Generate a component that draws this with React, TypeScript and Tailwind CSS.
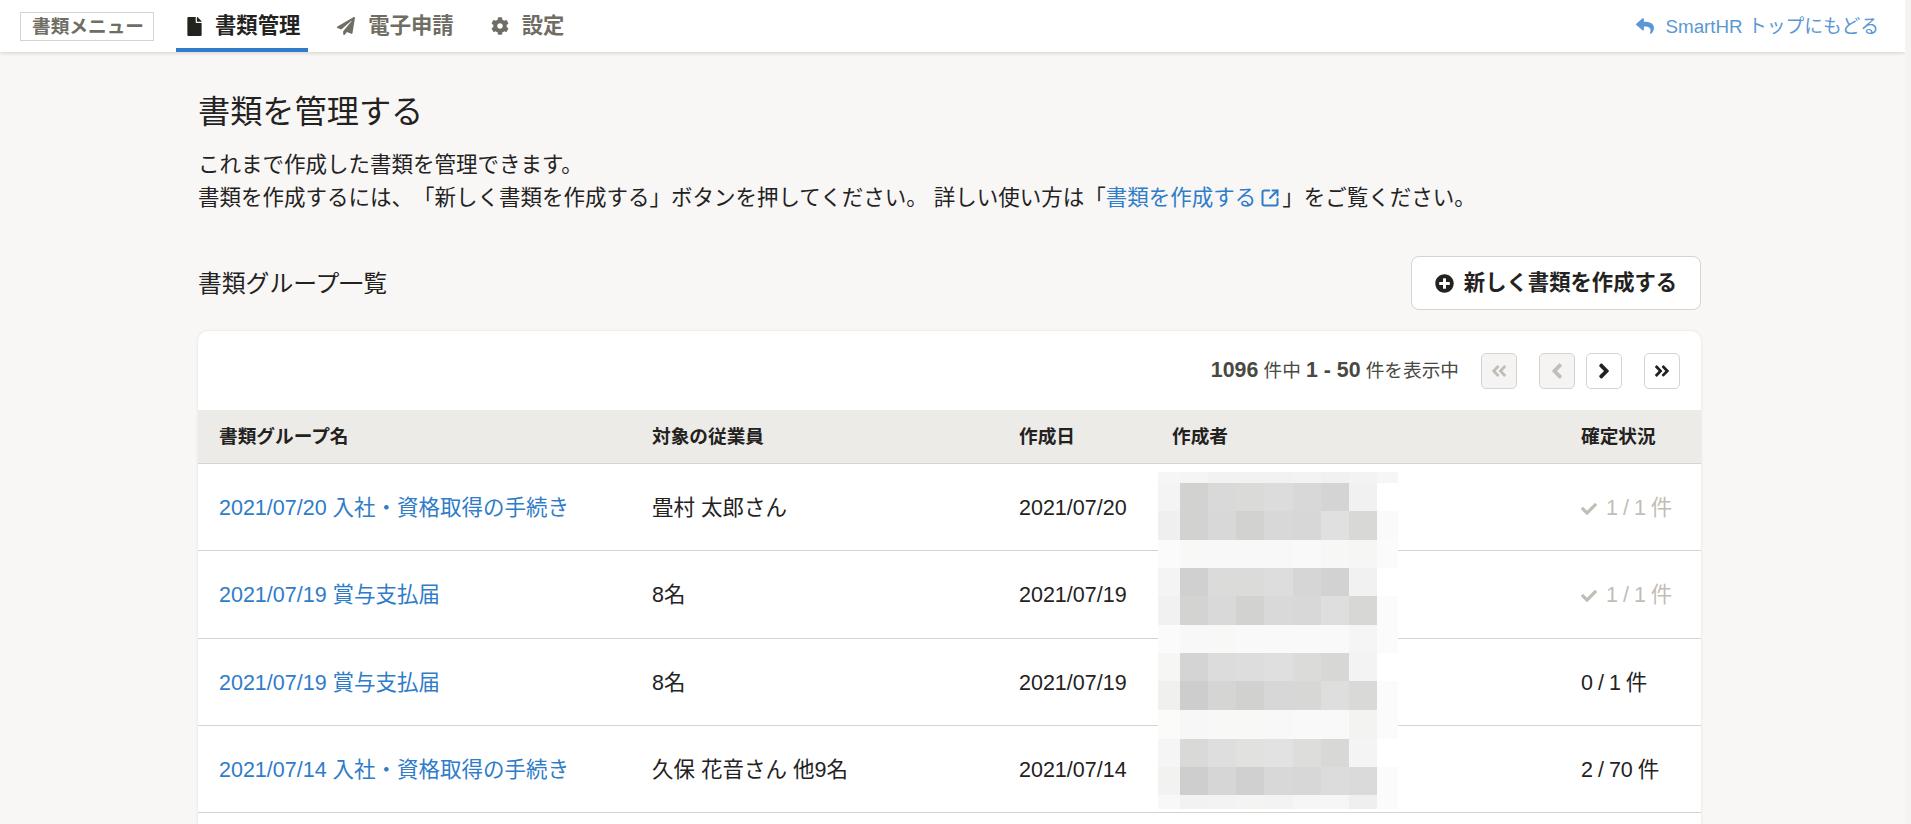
import {
  FaAngleDoubleLeft,
  FaAngleDoubleRight,
  FaAngleLeft,
  FaAngleRight,
  FaCheck,
  FaCog,
  FaFile,
  FaPaperPlane,
  FaPlusCircle,
  FaReply,
} from "react-icons/fa";
import { SquareArrowOutUpRight } from "lucide-react";
import type { ReactNode } from "react";

const mosaicCols = [22, 28, 28, 28, 29, 28, 28, 28, 21];
const mosaicRows = [11, 28, 29, 28, 28, 29, 28, 28, 29, 29, 28, 28, 14];
const mosaic = [
  ["#f6f6f4", "#f5f5f3", "#f3f2f0", "#f3f2f0", "#f3f2f0", "#f3f3f1", "#f1f1ef", "#f3f3f3", "#f6f6f4"],
  ["#f4f4f4", "#d2d2d0", "#d9d9d9", "#dadad8", "#dcdcdc", "#d8d8d8", "#d4d4d4", "#f1f1f1", "#ffffff"],
  ["#efefef", "#d2d2d0", "#d8d8d8", "#d2d2d0", "#d8d8d8", "#d7d7d7", "#e0e0e0", "#d8d8d6", "#fafafa"],
  ["#fbfbfb", "#f8f8f6", "#f8f8f8", "#f8f8f8", "#f8f8f8", "#f9f9f9", "#f7f7f5", "#f6f6f4", "#fbfbfb"],
  ["#f4f4f4", "#d0d0d0", "#dbdbd9", "#dbdbd9", "#dddddd", "#d6d6d6", "#d2d2d2", "#f1f1f1", "#ffffff"],
  ["#f1f1f1", "#d3d3d1", "#d9d9d9", "#d2d2d0", "#d9d9d9", "#d8d8d8", "#dedede", "#d7d7d5", "#fbfbfb"],
  ["#fbfbfb", "#f8f8f8", "#f8f8f6", "#f9f9f9", "#f9f9f9", "#f9f9f9", "#f9f9f9", "#f5f5f5", "#fbfbfb"],
  ["#f6f6f4", "#d4d4d4", "#dcdcdc", "#dddddd", "#dfdfdf", "#dbdbd9", "#d7d7d5", "#f3f3f3", "#ffffff"],
  ["#f0f0ee", "#cdcdcd", "#d5d5d3", "#d1d1cf", "#d7d7d7", "#d7d7d5", "#dedede", "#d9d9d7", "#fbfbfb"],
  ["#fbfbf9", "#f7f7f7", "#f8f8f6", "#f8f8f6", "#f8f8f8", "#f9f9f9", "#f9f9f9", "#f3f3f1", "#fbfbfb"],
  ["#f5f5f5", "#d9d9d7", "#dedede", "#e1e1df", "#e2e2e2", "#dddddb", "#d8d8d6", "#f4f4f4", "#ffffff"],
  ["#f2f2f0", "#cecece", "#d6d6d6", "#d0d0d0", "#d8d8d8", "#d7d7d7", "#dcdcdc", "#dadada", "#fbfbfb"],
  ["#f8f8f8", "#f2f2f2", "#f3f3f3", "#f4f4f2", "#f3f3f3", "#f6f6f6", "#f6f6f6", "#efefef", "#fbfbfb"],
];

const rows = [
  { name: "2021/07/20 入社・資格取得の手続き", target: "畳村 太郎さん", date: "2021/07/20", status: "1 / 1 件", done: true },
  { name: "2021/07/19 賞与支払届", target: "8名", date: "2021/07/19", status: "1 / 1 件", done: true },
  { name: "2021/07/19 賞与支払届", target: "8名", date: "2021/07/19", status: "0 / 1 件", done: false },
  { name: "2021/07/14 入社・資格取得の手続き", target: "久保 花音さん 他9名", date: "2021/07/14", status: "2 / 70 件", done: false },
];

const gridCols = "grid grid-cols-[431px_367px_153px_409px_1fr]";

// blurred-out author names, drawn over the table
const Mosaic = () => {
  let y = 0;
  return (
    <svg className="absolute left-[960px] top-[141px]" width="240" height="337" viewBox="0 0 240 337" shapeRendering="crispEdges">
      {mosaic.map((line, r) => {
        const top = y;
        y += mosaicRows[r];
        let x = 0;
        return line.map((fill, c) => {
          const left = x;
          x += mosaicCols[c];
          return <rect key={`${r}-${c}`} x={left} y={top} width={mosaicCols[c]} height={mosaicRows[r]} fill={fill} />;
        });
      })}
    </svg>
  );
};

const Tab = ({ icon, label, active }: { icon: ReactNode; label: string; active?: boolean }) => (
  <div
    className={`flex h-[52px] items-center gap-[13px] border-b-4 border-t-4 pl-[11px] pr-[8px] text-[21.33px] font-bold ${
      active ? "border-b-[#2f7cc8] border-t-transparent text-[#23221e]" : "border-transparent text-[#706d65]"
    }`}
  >
    {icon}
    <span>{label}</span>
  </div>
);

const PageButton = ({ children, disabled }: { children: ReactNode; disabled?: boolean }) => (
  <button
    className={`flex h-[36px] w-[36px] items-center justify-center rounded-[5px] border border-[#d6d3d0] ${
      disabled ? "bg-[#f5f4f3] text-[#c1bdb7]" : "bg-white text-[#23221e]"
    }`}
  >
    {children}
  </button>
);

export default function App() {
  return (
    <div
      lang="ja"
      className="h-[824px] w-[1911px] overflow-hidden border-r-[6px] border-[#f5f4f3] bg-[#f8f7f6] text-[21.5px] leading-[33px] text-[#23221e] [text-spacing-trim:space-all]"
      style={{ fontFamily: '"Liberation Sans", "Noto Sans CJK JP", sans-serif' }}
    >
      {/* Header */}
      <header className="relative z-10 flex h-[52px] items-center bg-white pl-[20px] pr-[26px] shadow-[0_1px_4px_rgba(0,0,0,0.16)]">
        <div className="mr-[22px] flex h-[29px] w-[134px] items-center justify-center border border-[#d6d3d0] pl-[2px] text-[18.67px] font-bold text-[#706d65]">
          書類メニュー
        </div>
        <div className="flex gap-[18px]">
          <Tab active icon={<FaFile className="h-[19px] w-[15px]" />} label="書類管理" />
          <Tab icon={<FaPaperPlane className="h-[18px] w-[18px]" />} label="電子申請" />
          <Tab icon={<FaCog className="h-[18px] w-[18px]" />} label="設定" />
        </div>
        <a className="ml-auto flex items-center gap-[10px] text-[18.8px] text-[#5b98d3]">
          <FaReply className="h-[18px] w-[20px]" />
          SmartHR トップにもどる
        </a>
      </header>

      {/* Main */}
      <main className="ml-[198px] w-[1503px] pt-[36px]">
        <h1 className="text-[32.2px] font-normal leading-[48px]">書類を管理する</h1>
        <p className="mt-[13px]">
          これまで作成した書類を管理できます。
          <br />
          書類を作成するには、「新しく書類を作成する」ボタンを押してください。 詳しい使い方は「
          <a className="text-[#2f7cc8]">
            書類を作成する
            <SquareArrowOutUpRight className="ml-[4px] mr-[2px] inline-block h-[20px] w-[20px] align-[-3px]" strokeWidth={2.4} />
          </a>
          」をご覧ください。
        </p>

        <div className="mt-[41px] flex items-center justify-between">
          <h2 className="text-[23.8px] font-normal">書類グループ一覧</h2>
          <button className="flex h-[54px] w-[290px] items-center justify-center gap-[10px] rounded-[8px] border border-[#d6d3d0] bg-white text-[21.33px] font-bold">
            <FaPlusCircle className="h-[19px] w-[19px]" />
            新しく書類を作成する
          </button>
        </div>

        {/* Table card */}
        <section className="relative mt-[21px] overflow-hidden rounded-t-[10px] bg-white shadow-[0_0_3px_rgba(0,0,0,0.1)]">
          <div className="flex h-[79px] items-center justify-end pr-[21px]">
            <div className="mr-[22px] text-[18.67px] text-[#4a4843]">
              <b className="text-[21.33px]">1096</b> 件中 <b className="text-[21.33px]">1 - 50</b> 件を表示中
            </div>
            <PageButton disabled>
              <FaAngleDoubleLeft className="h-[18px] w-[18px]" />
            </PageButton>
            <div className="ml-[22px]">
              <PageButton disabled>
                <FaAngleLeft className="h-[24px] w-[24px]" />
              </PageButton>
            </div>
            <div className="ml-[11px]">
              <PageButton>
                <FaAngleRight className="h-[24px] w-[24px]" />
              </PageButton>
            </div>
            <div className="ml-[22px]">
              <PageButton>
                <FaAngleDoubleRight className="h-[18px] w-[18px]" />
              </PageButton>
            </div>
          </div>

          <div className={`${gridCols} h-[54px] items-center border-b border-[#d6d3d0] bg-[#edebe8] text-[18.67px] font-bold`}>
            <div className="pl-[21px]">書類グループ名</div>
            <div className="pl-[23px]">対象の従業員</div>
            <div className="pl-[23px]">作成日</div>
            <div className="pl-[23px]">作成者</div>
            <div className="pl-[23px]">確定状況</div>
          </div>

          {rows.map((row, i) => (
            <div key={i} className={`${gridCols} h-[87.25px] items-center border-b border-[#d6d3d0] pt-[3px]`}>
              <a className="pl-[21px] text-[#2f7cc8]">{row.name}</a>
              <div className="pl-[23px]">{row.target}</div>
              <div className="pl-[23px]">{row.date}</div>
              <div />
              <div className={`flex items-center gap-[9px] pl-[23px] [word-spacing:-1px] ${row.done ? "text-[#c1bdb7]" : ""}`}>
                {row.done && <FaCheck className="h-[16px] w-[16px]" />}
                {row.status}
              </div>
            </div>
          ))}
          <div className="h-[40px]" />
          <Mosaic />
        </section>
      </main>
    </div>
  );
}
